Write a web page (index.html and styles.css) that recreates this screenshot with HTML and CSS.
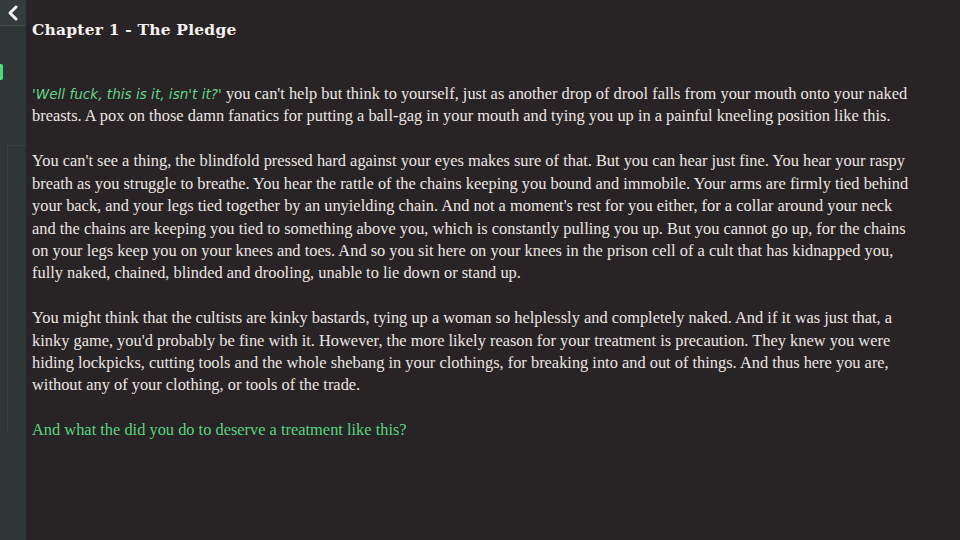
FILE: index.html
```html
<!DOCTYPE html>
<html lang="en">
<head>
  <meta charset="UTF-8">
  <title>Chapter 1 - The Pledge</title>
  <link rel="stylesheet" href="styles.css">
</head>
<body>

  <!-- Barra lateral -->
  <aside class="sidebar">
    <button class="back-btn" title="Back">
      <svg width="14" height="16" viewBox="0 0 14 16">
        <path d="M10 2 L4 8 L10 14" fill="none" stroke="#f2f2f2" stroke-width="3" stroke-linecap="round" stroke-linejoin="round"/>
      </svg>
    </button>
    <div class="tab-marker"></div>
    <div class="sidebar-frame"></div>
  </aside>

  <!-- Texto del capítulo -->
  <main class="story">
    <h1 class="chapter-title">Chapter 1 - The Pledge</h1>

    <p><span class="thought">'Well fuck, this is it, isn't it?'</span> you can't help but think to yourself, just as another drop of drool falls from your mouth onto your naked breasts. A pox on those damn fanatics for putting a ball-gag in your mouth and tying you up in a painful kneeling position like this.</p>

    <p>You can't see a thing, the blindfold pressed hard against your eyes makes sure of that. But you can hear just fine. You hear your raspy breath as you struggle to breathe. You hear the rattle of the chains keeping you bound and immobile. Your arms are firmly tied behind your back, and your legs tied together by an unyielding chain. And not a moment's rest for you either, for a collar around your neck and the chains are keeping you tied to something above you, which is constantly pulling you up. But you cannot go up, for the chains on your legs keep you on your knees and toes. And so you sit here on your knees in the prison cell of a cult that has kidnapped you, fully naked, chained, blinded and drooling, unable to lie down or stand up.</p>

    <p>You might think that the cultists are kinky bastards, tying up a woman so helplessly and completely naked. And if it was just that, a kinky game, you'd probably be fine with it. However, the more likely reason for your treatment is precaution. They knew you were hiding lockpicks, cutting tools and the whole shebang in your clothings, for breaking into and out of things. And thus here you are, without any of your clothing, or tools of the trade.</p>

    <p class="choice">And what the did you do to deserve a treatment like this?</p>
  </main>

</body>
</html>
```

FILE: styles.css
```css
html, body {
  margin: 0;
  padding: 0;
  height: 100%;
}

body {
  display: flex;
  background-color: #282324;
  color: #ebe6e2;
  font-family: "Liberation Serif", serif;
  overflow: hidden;
}

/* Sidebar */
.sidebar {
  position: relative;
  flex: 0 0 26px;
  background-color: #2f3636;
  border-right: 1px solid #232727;
}

.back-btn {
  display: flex;
  align-items: center;
  justify-content: center;
  width: 26px;
  height: 26px;
  padding: 0;
  margin: 0;
  background: #333b3b;
  border: none;
  border-bottom: 1px solid #475050;
  cursor: pointer;
}

.tab-marker {
  position: absolute;
  left: 0;
  top: 64px;
  width: 3px;
  height: 16px;
  border-radius: 0 2px 2px 0;
  background: #47e07a;
}

.sidebar-frame {
  position: absolute;
  left: 7px;
  top: 145px;
  width: 19px;
  height: 285px;
  border-left: 1px solid #384141;
  border-top: 1px solid #384141;
}

/* Story */
.story {
  flex: 0 0 885px;
  box-sizing: border-box;
  padding: 20px 0 0 5px;
}

.chapter-title {
  margin: 0 0 44px;
  font-family: "DejaVu Serif", serif;
  font-size: 15.5px;
  font-weight: bold;
  letter-spacing: 0.2px;
  color: #f4f1ee;
}

.story p {
  margin: 0 0 22.5px;
  font-size: 16.4px;
  line-height: 22.4px;
}

.thought {
  font-family: "DejaVu Sans", sans-serif;
  font-style: italic;
  font-size: 13.6px;
  color: #62d78c;
}

.story p.choice {
  color: #57d47f;
}
```
